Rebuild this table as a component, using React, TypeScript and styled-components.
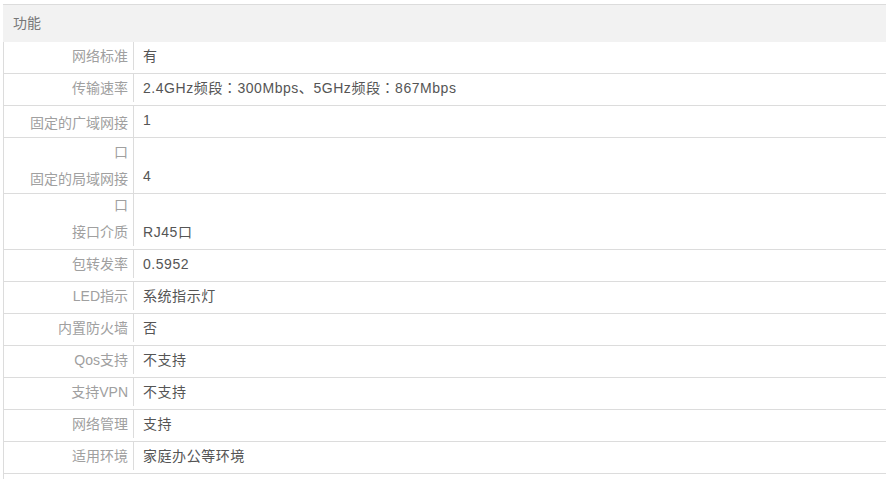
import styled, { createGlobalStyle } from "styled-components";

type Spec = {
  label: string;
  value: string;
  carry?: string;
  flush?: boolean;
};

const specs: Spec[] = [
  { label: "网络标准", value: "有" },
  { label: "传输速率", value: "2.4GHz频段：300Mbps、5GHz频段：867Mbps" },
  { label: "固定的广域网接", value: "1", flush: true },
  { label: "固定的局域网接", carry: "口", value: "4", flush: true },
  { label: "接口介质", carry: "口", value: "RJ45口" },
  { label: "包转发率", value: "0.5952" },
  { label: "LED指示", value: "系统指示灯" },
  { label: "内置防火墙", value: "否" },
  { label: "Qos支持", value: "不支持" },
  { label: "支持VPN", value: "不支持" },
  { label: "网络管理", value: "支持" },
  { label: "适用环境", value: "家庭办公等环境" },
];

export default function App() {
  return (
    <>
      <GlobalStyle />
      <Panel>
        <Header>功能</Header>
        <Body>
          {specs.map((s) => (
            <Row key={s.label} $tall={!!s.carry}>
              <Label $flush={!!s.flush}>
                {s.carry && <Carry>{s.carry}</Carry>}
                <LabelText>{s.label}</LabelText>
              </Label>
              <Value>{s.value}</Value>
            </Row>
          ))}
        </Body>
      </Panel>
    </>
  );
}

const GlobalStyle = createGlobalStyle`
  html, body {
    margin: 0;
    padding: 0;
    background: #fff;
  }
  body {
    font-family: "Liberation Sans", "Noto Sans CJK SC", sans-serif;
    font-size: 14px;
  }
`;

const Panel = styled.div`
  margin: 4px 5px 0 3px;
`;

const Header = styled.div`
  border-top: 1px solid #dcdcdc;
  background: #f2f2f2;
  height: 37px;
  line-height: 37px;
  padding-left: 10px;
  color: #777;
`;

const Body = styled.div`
  border-left: 1px solid #dcdcdc;
  padding-bottom: 12px;
`;

const Row = styled.div<{ $tall: boolean }>`
  display: flex;
  align-items: stretch;
  height: ${({ $tall }) => ($tall ? 55 : 31)}px;
  border-bottom: 1px solid #dcdcdc;
`;

const Label = styled.div<{ $flush: boolean }>`
  flex: 0 0 130px;
  box-sizing: border-box;
  width: 130px;
  padding-right: 5px;
  margin-bottom: ${({ $flush }) => ($flush ? 0 : 3)}px;
  border-right: 1px solid #dcdcdc;
  display: flex;
  flex-direction: column;
  justify-content: flex-end;
  align-items: flex-end;
  color: #a0a0a0;
  white-space: nowrap;
`;

const Carry = styled.div`
  line-height: 18px;
  margin-bottom: 4px;
`;

const LabelText = styled.div`
  line-height: 28px;
`;

const Value = styled.div`
  align-self: flex-end;
  padding: 0 0 3px 9px;
  line-height: 28px;
  font-family: "Liberation Sans", "Noto Sans CJK JP", sans-serif;
  letter-spacing: 0.55px;
  color: #555;
`;
